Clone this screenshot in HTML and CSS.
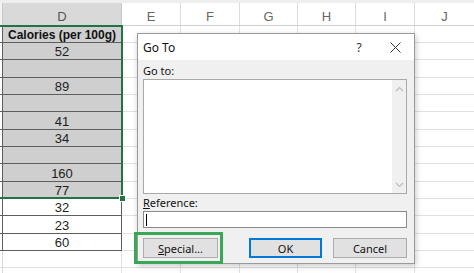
FILE: index.html
```html
<!DOCTYPE html>
<html>
<head>
<meta charset="utf-8">
<link rel="stylesheet" href="styles.css">
</head>
<body>
<div class="sheet">
  <div class="topstrip"></div>
  <div class="colheads">
    <div class="ch c"></div>
    <div class="ch d">D</div>
    <div class="ch">E</div>
    <div class="ch">F</div>
    <div class="ch">G</div>
    <div class="ch">H</div>
    <div class="ch">I</div>
    <div class="ch last">J</div>
  </div>
  <div class="rows">
    <div class="row h17"><div class="c"></div><div class="d sel bold">Calories (per 100g)</div><div class="rest"></div></div>
    <div class="row h17"><div class="c"></div><div class="d sel">52</div><div class="rest"></div></div>
    <div class="row h18"><div class="c"></div><div class="d sel"></div><div class="rest"></div></div>
    <div class="row h17"><div class="c"></div><div class="d sel">89</div><div class="rest"></div></div>
    <div class="row h17"><div class="c"></div><div class="d sel"></div><div class="rest"></div></div>
    <div class="row h18"><div class="c"></div><div class="d sel">41</div><div class="rest"></div></div>
    <div class="row h17"><div class="c"></div><div class="d sel">34</div><div class="rest"></div></div>
    <div class="row h17"><div class="c"></div><div class="d sel"></div><div class="rest"></div></div>
    <div class="row h18"><div class="c"></div><div class="d sel">160</div><div class="rest"></div></div>
    <div class="row h17"><div class="c"></div><div class="d sel">77</div><div class="rest"></div></div>
    <div class="row h17"><div class="c"></div><div class="d">32</div><div class="rest"></div></div>
    <div class="row h18"><div class="c"></div><div class="d">23</div><div class="rest"></div></div>
    <div class="row h17"><div class="c"></div><div class="d">60</div><div class="rest"></div></div>
    <div class="row h17"><div class="c plain"></div><div class="d plain"></div><div class="rest"></div></div>
    <div class="row h17"><div class="c plain"></div><div class="d plain"></div><div class="rest"></div></div>
  </div>
  <div class="selection"></div>
  <div class="handle"></div>
</div>

<div class="dialog">
  <div class="titlebar">
    <span class="title">Go To</span>
    <span class="tbtn help">?</span>
    <span class="tbtn close">
      <svg width="11" height="11" viewBox="0 0 11 11"><path d="M0.5 0.5 L10.5 10.5 M10.5 0.5 L0.5 10.5" stroke="#333" stroke-width="1" fill="none"/></svg>
    </span>
  </div>
  <div class="dbody">
    <div class="label first">Go to:</div>
    <div class="listbox">
      <div class="scroll">
        <svg class="arr" width="9" height="6" viewBox="0 0 9 6"><path d="M1 5 L4.5 1.5 L8 5" stroke="#bdbdbd" stroke-width="1.2" fill="none"/></svg>
        <svg class="arr" width="9" height="6" viewBox="0 0 9 6"><path d="M1 1 L4.5 4.5 L8 1" stroke="#bdbdbd" stroke-width="1.2" fill="none"/></svg>
      </div>
    </div>
    <div class="label second"><u>R</u>eference:</div>
    <div class="input"><span class="caret"></span></div>
    <div class="buttons">
      <div class="btn special"><u>S</u>pecial...</div>
      <div class="btn ok">OK</div>
      <div class="btn cancel">Cancel</div>
    </div>
  </div>
</div>
<div class="highlight"></div>
</body>
</html>
```

FILE: styles.css
```css
html, body {
  margin: 0;
  padding: 0;
}
body {
  width: 474px;
  height: 273px;
  overflow: hidden;
  position: relative;
  background: #ffffff;
  font-family: "Liberation Sans", Arial, sans-serif;
}
.sheet {
  position: relative;
}
.topstrip {
  height: 3px;
  background: #eeeeee;
  border-bottom: 0;
}
.colheads {
  display: grid;
  grid-template-columns: 3px 119px 59px 59px 58px 58px 59px 59px;
  height: 23px;
  border-bottom: 1px solid #d0d0d0;
  box-sizing: border-box;
}
.ch {
  display: flex;
  align-items: center;
  justify-content: center;
  font-size: 13px;
  color: #666;
  padding-top: 4px;
  box-sizing: border-box;
  border-right: 1px solid #dddddd;
  background: #ffffff;
}
.ch.c {
  background: #f3f3f3;
  border-right: 1px solid #c8c8c8;
}
.ch.d {
  background: #d9d9d9;
  color: #555;
  border-right: 1px solid #c8c8c8;
}
.ch.last {
  border-right: 0;
}
.rows {
  display: flex;
  flex-direction: column;
}
.row {
  display: grid;
  grid-template-columns: 3px 119px 1fr;
}
.h17 { height: 17px; }
.h18 { height: 18px; }
.row .c {
  border-right: 1px solid #5e5e5e;
  border-bottom: 1px solid #5e5e5e;
  box-sizing: border-box;
  background: #ffffff;
}
.row .c.plain {
  border-right: 1px solid #d6d6d6;
  border-bottom: 1px solid #e1e1e1;
}
.row .d {
  border-right: 1px solid #5e5e5e;
  border-bottom: 1px solid #5e5e5e;
  box-sizing: border-box;
  display: flex;
  align-items: center;
  justify-content: center;
  font-size: 13px;
  color: #1e1e1e;
  padding-top: 1px;
}
.row .d.plain {
  border-right: 1px solid #e1e1e1;
  border-bottom: 1px solid #e1e1e1;
}
.row .d.sel {
  background: #cfcfcf;
}
.row .d.bold {
  font-weight: bold;
  font-size: 12px;
  color: #111;
}
.row .rest {
  border-bottom: 1px solid #e1e1e1;
  box-sizing: border-box;
  background:
    linear-gradient(#e1e1e1, #e1e1e1) 58px 0 / 1px 100% no-repeat,
    linear-gradient(#e1e1e1, #e1e1e1) 117px 0 / 1px 100% no-repeat,
    linear-gradient(#e1e1e1, #e1e1e1) 175px 0 / 1px 100% no-repeat,
    linear-gradient(#e1e1e1, #e1e1e1) 233px 0 / 1px 100% no-repeat,
    linear-gradient(#e1e1e1, #e1e1e1) 292px 0 / 1px 100% no-repeat,
    #ffffff;
}
.selection {
  position: absolute;
  left: -2px;
  top: 25px;
  width: 125px;
  height: 174px;
  border: 2px solid #217346;
  box-sizing: border-box;
}
.handle {
  position: absolute;
  left: 119px;
  top: 195px;
  width: 5px;
  height: 5px;
  background: #217346;
  border: 1px solid #ffffff;
}

/* Dialog */
.dialog {
  position: absolute;
  left: 137px;
  top: 33px;
  width: 278px;
  height: 231px;
  box-sizing: border-box;
  border: 1px solid #9a9a9a;
  background: #f0f0f0;
  box-shadow: 1px 2px 6px rgba(0, 0, 0, 0.22);
  font-family: "Noto Sans", "Liberation Sans", sans-serif;
  display: flex;
  flex-direction: column;
}
.titlebar {
  height: 26px;
  background: #ffffff;
  display: flex;
  align-items: center;
  padding-left: 5px;
  flex: none;
}
.title {
  font-size: 12px;
  color: #111;
  flex: 1;
}
.tbtn {
  width: 36px;
  display: flex;
  justify-content: center;
  align-items: center;
  color: #333;
}
.help {
  font-size: 12px;
}
.close {
  margin-right: 1px;
}
.dbody {
  flex: 1;
  padding: 0 7px 0 5px;
  display: flex;
  flex-direction: column;
}
.label {
  font-size: 11px;
  color: #111;
  line-height: 14px;
}
.label.first {
  margin-top: 4px;
  height: 15px;
}
.label.second {
  margin-top: 2px;
  height: 15px;
}
.listbox {
  height: 115px;
  box-sizing: border-box;
  border: 1px solid #a9a9a9;
  background: #ffffff;
  display: flex;
  justify-content: flex-end;
}
.scroll {
  width: 14px;
  background: #f0f0f0;
  display: flex;
  flex-direction: column;
  justify-content: space-between;
  align-items: center;
  padding: 6px 0 5px;
}
.input {
  height: 17px;
  box-sizing: border-box;
  border: 1px solid #8a8a8a;
  background: #ffffff;
  display: flex;
  align-items: center;
  padding-left: 2px;
}
.caret {
  width: 1px;
  height: 12px;
  background: #000;
}
.buttons {
  display: flex;
  margin-top: 10px;
}
.btn {
  height: 20px;
  box-sizing: border-box;
  border: 1px solid #adadad;
  background: #e1e1e1;
  font-size: 11px;
  color: #111;
  display: flex;
  align-items: center;
  justify-content: center;
}
.special {
  width: 75px;
}
.ok {
  width: 73px;
  margin-left: 31px;
  border: 2px solid #0078d7;
}
.cancel {
  width: 74px;
  margin-left: 11px;
}
.highlight {
  position: absolute;
  left: 134px;
  top: 232px;
  width: 89px;
  height: 32px;
  box-sizing: border-box;
  border: 3px solid #3aa757;
}
```
